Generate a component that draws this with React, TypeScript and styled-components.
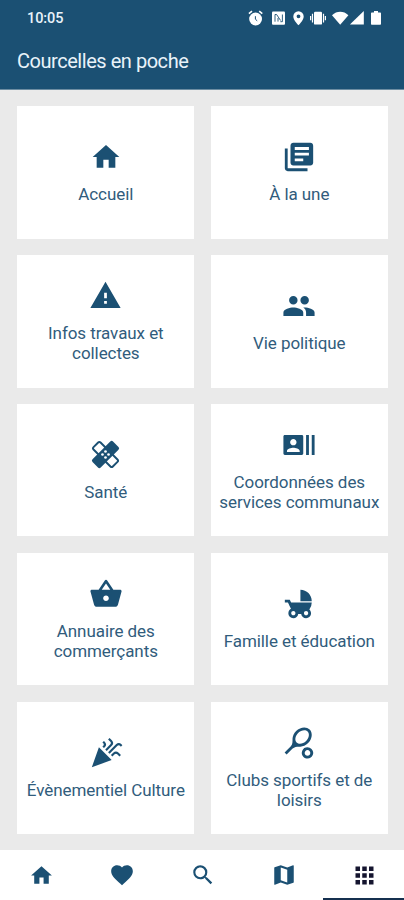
import React from 'react';
import styled, { createGlobalStyle } from 'styled-components';
import type { IconType } from 'react-icons';
import {
  MdApps,
  MdCelebration,
  MdChildFriendly,
  MdFavorite,
  MdHome,
  MdLibraryBooks,
  MdMap,
  MdPeople,
  MdRecentActors,
  MdSearch,
  MdShoppingBasket,
  MdSportsTennis,
  MdWarning,
} from 'react-icons/md';

const NAVY = '#1b5073';

const GlobalStyle = createGlobalStyle`
  * { box-sizing: border-box; }
  body { margin: 0; font-family: Roboto, "Liberation Sans", sans-serif; background: #eaeaea; }
`;

const Screen = styled.div`
  display: flex;
  flex-direction: column;
  width: 404px;
  height: 900px;
  overflow: hidden;
  background: #eaeaea;
`;

const Header = styled.header`
  height: 90px;
  flex: none;
  background: ${NAVY};
  border-bottom: 1px solid #6d8da2;
  color: #e9f3fa;
`;

const StatusBar = styled.div`
  display: flex;
  align-items: center;
  justify-content: space-between;
  height: 36px;
  padding: 0 22.5px 0 27px;
`;

const Clock = styled.span`
  font-size: 14.5px;
  font-weight: 500;
  letter-spacing: -0.1px;
`;

const StatusIcons = styled.svg`
  display: block;
  width: 134px;
  height: 18px;
`;

const Title = styled.h1`
  margin: 0;
  padding: 13px 17px 0;
  font-size: 20px;
  font-weight: 400;
  line-height: 24px;
  letter-spacing: -0.46px;
`;

const Grid = styled.main`
  flex: 1;
  display: grid;
  grid-template-columns: 177px 177px;
  grid-auto-rows: 132.4px;
  gap: 16.5px 16.5px;
  padding: 16.3px 0 0 17.3px;
`;

const Card = styled.a`
  display: flex;
  flex-direction: column;
  align-items: center;
  justify-content: center;
  gap: 10.5px;
  padding-bottom: 0.5px;
  background: #fff;
  color: ${NAVY};
`;

const IconSlot = styled.span`
  display: flex;
  align-items: center;
  justify-content: center;
  width: 34px;
  height: 34px;
`;

const Label = styled.span`
  font-size: 17px;
  line-height: 20px;
  text-align: center;
  white-space: pre-line;
  letter-spacing: -0.07px;
  color: #315c7c;
`;

const NavBar = styled.nav`
  flex: none;
  display: grid;
  grid-template-columns: repeat(5, 1fr);
  height: 50.5px;
  background: #fff;
`;

const NavItem = styled.a<{ $active?: boolean }>`
  display: flex;
  align-items: center;
  justify-content: center;
  padding: 3px 0 0 2px;
  border-bottom: 2px solid ${(p) => (p.$active ? '#15304f' : 'transparent')};
  color: ${(p) => (p.$active ? '#15152f' : NAVY)};
`;

const BandageIcon = ({ size = 34 }: { size?: number | string }) => (
  <svg width={size} height={size} viewBox="0 0 24 24">
    <g transform="rotate(45 12 12)">
      <rect x="0.7" y="7.9" width="22.6" height="8.2" rx="1.4" fill="#fff" stroke="currentColor" strokeWidth="1.6" />
    </g>
    <g transform="rotate(-45 12 12)">
      <rect x="0" y="7.2" width="24" height="9.6" rx="1.6" fill="currentColor" />
    </g>
    <g fill="#fff">
      <circle cx="12" cy="9.5" r="1.1" />
      <circle cx="12" cy="14.5" r="1.1" />
      <circle cx="9.5" cy="12" r="1.1" />
      <circle cx="14.5" cy="12" r="1.1" />
    </g>
  </svg>
);

type Tile = { label: string; icon: IconType | typeof BandageIcon; size: number };

const tiles: Tile[] = [
  { label: 'Accueil', icon: MdHome, size: 32 },
  { label: 'À la une', icon: MdLibraryBooks, size: 34 },
  { label: 'Infos travaux et\ncollectes', icon: MdWarning, size: 33 },
  { label: 'Vie politique', icon: MdPeople, size: 34 },
  { label: 'Santé', icon: BandageIcon, size: 29 },
  { label: 'Coordonnées des\nservices communaux', icon: MdRecentActors, size: 34 },
  { label: 'Annuaire des\ncommerçants', icon: MdShoppingBasket, size: 34 },
  { label: 'Famille et éducation', icon: MdChildFriendly, size: 34 },
  { label: 'Évènementiel Culture', icon: MdCelebration, size: 34 },
  { label: 'Clubs sportifs et de\nloisirs', icon: MdSportsTennis, size: 34 },
];

const tabs: { name: string; icon: IconType; size: number; active?: boolean }[] = [
  { name: 'Accueil', icon: MdHome, size: 25 },
  { name: 'Favoris', icon: MdFavorite, size: 26 },
  { name: 'Recherche', icon: MdSearch, size: 26 },
  { name: 'Carte', icon: MdMap, size: 26 },
  { name: 'Menu', icon: MdApps, size: 27, active: true },
];

export default function App() {
  return (
    <>
      <GlobalStyle />
      <Screen>
        <Header>
          <StatusBar>
            <Clock>10:05</Clock>
            <StatusIcons viewBox="0 0 134 18" fill="#fff">
              {/* alarm */}
              <circle cx="7.6" cy="10" r="6.4" />
              <path d="M.9 4.7 4 2.1M14.3 4.7 11.2 2.1" stroke="#fff" strokeWidth="1.6" />
              <path d="M7.4 7.2v3l1.8 1.6" fill="none" stroke={NAVY} strokeWidth="1" />
              {/* nfc */}
              <rect x="24" y="2.6" width="13" height="13.2" rx="1" />
              <path d="M27 12.7V5.5h1.6l4 6M34.4 5.5v7.2h-2M30 12.6V9" fill="none" stroke={NAVY} strokeWidth="0.9" />
              {/* location */}
              <path
                fillRule="evenodd"
                d="M50.5 2.2a5.2 5.2 0 0 0-5.2 5.2c0 3.8 5.2 8.8 5.2 8.8s5.2-5 5.2-8.8a5.2 5.2 0 0 0-5.2-5.2Zm0 3.2a1.9 1.9 0 1 1 0 3.8 1.9 1.9 0 0 1 0-3.8Z"
              />
              {/* vibrate */}
              <rect x="66" y="2.8" width="8" height="12.8" rx="1.2" />
              <path d="M64.5 4.8v8.6M62.6 7v4.200M75.500 4.800v8.600M77.400 7v4.200" stroke="#fff" strokeWidth="1.2" />
              {/* wifi */}
              <path d="M84 6.2c4.8-4.5 11.6-4.5 16.4 0l-8.2 9.6Z" />
              {/* signal */}
              <path d="M115.8 2v13.6h-13.9Z" />
              {/* battery */}
              <path d="M126 2h4v1.6h2c.6 0 1 .4 1 1v10.2c0 .6-.4 1-1 1h-8c-.6 0-1-.4-1-1V4.6c0-.6.4-1 1-1h2Z" />
            </StatusIcons>
          </StatusBar>
          <Title>Courcelles en poche</Title>
        </Header>
        <Grid>
          {tiles.map(({ label, icon: Icon, size }) => (
            <Card key={label}>
              <IconSlot>
                <Icon size={size} />
              </IconSlot>
              <Label>{label}</Label>
            </Card>
          ))}
        </Grid>
        <NavBar>
          {tabs.map(({ name, icon: Icon, size, active }) => (
            <NavItem key={name} $active={active} aria-label={name}>
              <Icon size={size} />
            </NavItem>
          ))}
        </NavBar>
      </Screen>
    </>
  );
}
